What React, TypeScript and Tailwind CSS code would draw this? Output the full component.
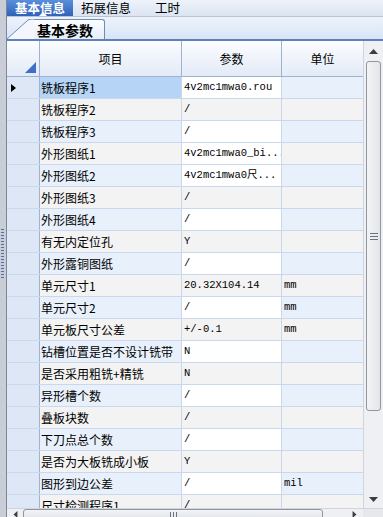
import React from "react";

const rows: { name: string; value: string; unit?: string }[] = [
  { name: "铣板程序1", value: "4v2mc1mwa0.rou" },
  { name: "铣板程序2", value: "/" },
  { name: "铣板程序3", value: "/" },
  { name: "外形图纸1", value: "4v2mc1mwa0_bi..." },
  { name: "外形图纸2", value: "4v2mc1mwa0尺..." },
  { name: "外形图纸3", value: "/" },
  { name: "外形图纸4", value: "/" },
  { name: "有无内定位孔", value: "Y" },
  { name: "外形露铜图纸", value: "/" },
  { name: "单元尺寸1", value: "20.32X104.14", unit: "mm" },
  { name: "单元尺寸2", value: "/", unit: "mm" },
  { name: "单元板尺寸公差", value: "+/-0.1", unit: "mm" },
  { name: "钻槽位置是否不设计铣带", value: "N" },
  { name: "是否采用粗铣+精铣", value: "N" },
  { name: "异形槽个数", value: "/" },
  { name: "叠板块数", value: "/" },
  { name: "下刀点总个数", value: "/" },
  { name: "是否为大板铣成小板", value: "Y" },
  { name: "图形到边公差", value: "/", unit: "mil" },
  { name: "尺寸检测程序1", value: "/" },
];

const cjk = "font-['SimSun','Noto_Sans_CJK_SC',sans-serif]";
const mono = "font-['Liberation_Mono','Noto_Sans_CJK_SC',monospace]";

function GridRow({ i, name, value, unit }: { i: number; name: string; value: string; unit?: string }) {
  const odd = i % 2 === 0;
  const selected = i === 0;
  return (
    <div className="flex h-[22px] shrink-0 border-b border-[#c9d8ec]">
      <div className="w-[33px] shrink-0 bg-[#dde7f5] border-r border-[#9fb3d1] flex items-center pl-[4px]">
        {selected && (
          <svg width="5" height="8" viewBox="0 0 5 8">
            <path d="M0 0 L5 4 L0 8 Z" fill="#000" />
          </svg>
        )}
      </div>
      <div
        className={`w-[142px] shrink-0 border-r border-[#c9d8ec] flex items-center pl-[1px] text-[12px] text-black whitespace-nowrap overflow-hidden ${cjk} ${
          selected ? "bg-[#b6d4f5]" : odd ? "bg-[#e8f0fb]" : "bg-[#f3f3f3]"
        }`}
      >
        {name}
      </div>
      <div
        className={`w-[100px] shrink-0 border-r border-[#c9d8ec] flex items-center pl-[2px] text-[10.5px] text-black whitespace-nowrap overflow-hidden ${mono} ${
          odd || i === 3 ? "bg-white" : "bg-[#f3f3f3]"
        }`}
      >
        {value}
      </div>
      <div
        className={`flex-1 flex items-center pl-[2px] text-[10.5px] text-black ${mono} ${
          odd ? "bg-[#e8f0fb]" : "bg-[#f3f3f3]"
        }`}
      >
        {unit}
      </div>
    </div>
  );
}

export default function App() {
  return (
    <div className="w-[383px] h-[517px] flex overflow-hidden bg-[#e4ebf5]">
      <div className="w-[7px] shrink-0 bg-[#c9ced6] border-r border-[#7d8796] flex flex-col justify-center">
        <div className="h-[50px] ml-[1px] w-[3px] mb-[10px] bg-[repeating-linear-gradient(to_bottom,#4f6fa8_0px,#4f6fa8_1px,transparent_1px,transparent_3px)]" />
      </div>
      <div className="flex-1 flex flex-col min-w-0">
        {/* top tabs */}
        <div className="h-[17px] shrink-0 flex items-stretch bg-gradient-to-b from-[#eef3fa] to-[#dbe4f1] border-b border-[#b8c4d6]">
          <div className="relative w-[66px] bg-gradient-to-b from-[#5b8fdc] to-[#2f62b8] flex items-center justify-center">
            <span className={`text-[12.5px] font-bold text-white leading-[14px] ${cjk}`}>基本信息</span>
            <svg className="absolute bottom-0 left-[32px]" width="8" height="4" viewBox="0 0 8 4">
              <path d="M0 4 L4 0 L8 4 Z" fill="#fff" />
            </svg>
          </div>
          <div className={`ml-[8px] flex items-center text-[12.5px] text-black leading-[14px] ${cjk}`}>拓展信息</div>
          <div className={`ml-[24px] flex items-center text-[12.5px] text-black leading-[14px] ${cjk}`}>工时</div>
        </div>
        {/* sub tabs */}
        <div className="h-[24px] shrink-0 flex items-end bg-gradient-to-b from-[#eef3fb] to-[#d7e4f7] border-b-2 border-[#5f80bb]">
          <div className="relative h-[20px] w-[98px] flex items-end">
            <svg className="absolute left-0 bottom-0" width="28" height="20" viewBox="0 0 28 20">
              <path d="M0 20 L21 1 Q23 0 26 0 L28 0 L28 20 Z" fill="#f3f7fd" />
              <path d="M0 20 L21 1 Q23 0 26 0 L28 0" fill="none" stroke="#6f8cb8" strokeWidth="1" />
            </svg>
            <div className="absolute left-[27px] right-0 top-0 bottom-0 bg-gradient-to-b from-[#fbfdff] to-[#e6eefa] border-t border-r border-[#6f8cb8] rounded-tr-[3px] flex items-center justify-center">
              <span className={`text-[14px] font-bold text-black leading-none mr-[8px] ${cjk}`}>基本参数</span>
            </div>
          </div>
        </div>
        {/* grid */}
        <div className="flex-1 flex flex-col min-h-0 bg-white">
          <div className="flex-1 flex min-h-0">
            <div className="flex-1 flex flex-col min-h-0 min-w-0">
              <div className="h-[36px] shrink-0 flex border-b border-[#9fb3d1] bg-gradient-to-b from-[#fbfcfe] to-[#e3ebf7]">
                <div className="w-[33px] shrink-0 border-r border-[#9fb3d1] relative">
                  <svg className="absolute right-[3px] bottom-[3px]" width="11" height="11" viewBox="0 0 11 11">
                    <path d="M11 0 L11 11 L0 11 Z" fill="#3f6fc6" />
                  </svg>
                </div>
                <div className={`w-[142px] shrink-0 border-r border-[#9fb3d1] flex items-center justify-center text-[12px] text-black ${cjk}`}>项目</div>
                <div className={`w-[100px] shrink-0 border-r border-[#9fb3d1] flex items-center justify-center text-[12px] text-black ${cjk}`}>参数</div>
                <div className={`flex-1 flex items-center justify-center text-[12px] text-black ${cjk}`}>单位</div>
              </div>
              <div className="flex-1 flex flex-col overflow-hidden min-h-0">
                {rows.map((r, i) => (
                  <GridRow key={i} i={i} name={r.name} value={r.value} unit={r.unit} />
                ))}
              </div>
            </div>
            {/* vertical scrollbar */}
            <div className="w-[20px] shrink-0 bg-[#eef0f3] border-l border-[#d0d5dd] flex flex-col items-center">
              <div className="h-[20px] flex items-center justify-center">
                <svg width="9" height="5" viewBox="0 0 9 5">
                  <path d="M0 5 L4.5 0 L9 5 Z" fill="#3d3d3d" />
                </svg>
              </div>
              <div className="w-[15px] h-[350px] rounded-[3px] border border-[#8f96a0] bg-gradient-to-r from-[#f3f4f6] to-[#e2e5ea] flex items-center justify-center">
                <div className="flex flex-col gap-[2px]">
                  <div className="w-[8px] h-px bg-[#6b7280]" />
                  <div className="w-[8px] h-px bg-[#6b7280]" />
                  <div className="w-[8px] h-px bg-[#6b7280]" />
                </div>
              </div>
              <div className="flex-1" />
              <div className="h-[18px] flex items-center justify-center">
                <svg width="9" height="5" viewBox="0 0 9 5">
                  <path d="M0 0 L4.5 5 L9 0 Z" fill="#3d3d3d" />
                </svg>
              </div>
            </div>
          </div>
          {/* horizontal scrollbar */}
          <div className="h-[9px] shrink-0 flex bg-[#eef0f3] border-t border-[#d0d5dd]">
            <div className="w-[16px] flex items-start justify-center pt-[2px]">
              <svg width="5" height="7" viewBox="0 0 5 9">
                <path d="M5 0 L0 4.5 L5 9 Z" fill="#3d3d3d" />
              </svg>
            </div>
            <div className="w-[300px] h-[10px] rounded-t-[3px] border border-[#8f96a0] bg-gradient-to-b from-[#f3f4f6] to-[#e2e5ea] flex justify-center pt-[2px] gap-[2px]">
              <div className="w-px h-[5px] bg-[#6b7280]" />
              <div className="w-px h-[5px] bg-[#6b7280]" />
              <div className="w-px h-[5px] bg-[#6b7280]" />
            </div>
            <div className="flex-1 flex items-start justify-end pr-[6px] pt-[2px]">
              <svg width="5" height="7" viewBox="0 0 5 9">
                <path d="M0 0 L5 4.5 L0 9 Z" fill="#3d3d3d" />
              </svg>
            </div>
            <div className="w-[20px] bg-[#e6e8ec]" />
          </div>
        </div>
      </div>
    </div>
  );
}
